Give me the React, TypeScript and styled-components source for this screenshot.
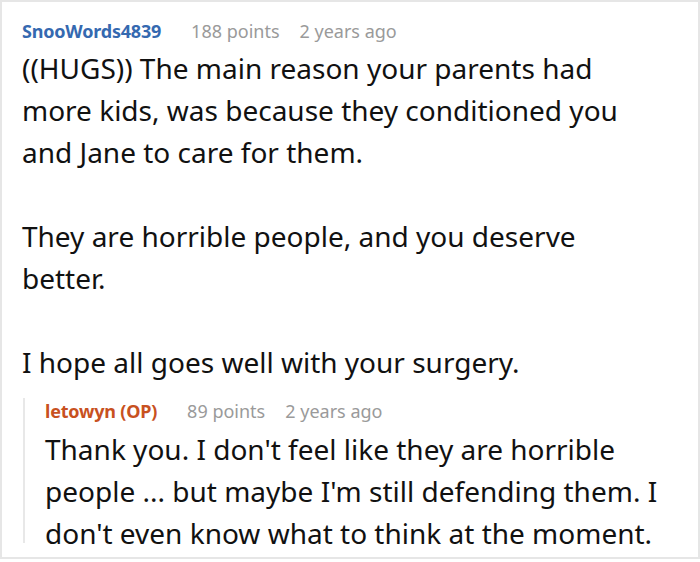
import { ReactElement } from "react";
import styled, { createGlobalStyle } from "styled-components";

const GlobalStyle = createGlobalStyle`
    html, body {
        margin: 0;
        padding: 0;
        background: #ffffff;
    }
    body {
        font-family: "Noto Sans", "Open Sans", sans-serif;
        color: #111111;
    }
`;

const CommentFrame = styled.div`
    box-sizing: border-box;
    width: 700px;
    height: 559px;
    border: 2px solid #e6e6e6;
    padding: 16px 46px 13px 20px;
`;

const MetaRow = styled.div`
    display: flex;
    align-items: baseline;
    gap: 30px;
    font-size: 18px;
    line-height: 26px;
`;

const Author = styled.span<{ $op?: boolean }>`
    font-weight: 700;
    letter-spacing: -0.2px;
    color: ${(p) => (p.$op ? "#c8511f" : "#3569b0")};
`;

const MetaInfo = styled.span`
    color: #9a9a9a;
`;

const MetaGroup = styled.span`
    display: flex;
    gap: 20px;
`;

const Body = styled.div`
    font-size: 28px;
    line-height: 42px;
    margin-top: 3px;
    p {
        margin: 0;
    }
    p + p {
        margin-top: 42px;
    }
`;

const Reply = styled.div`
    display: flex;
    flex-direction: column;
    margin-top: 15px;
    border-left: 2px solid #e8e8e8;
    padding-left: 20px;
    margin-left: 1px;
    margin-right: -30px;

    ${Body} {
        margin-top: 4px;
        margin-bottom: -11px;
    }
`;

type CommentProps = {
    author: string;
    op?: boolean;
    points: string;
    age: string;
    paragraphs: string[];
};

function CommentHeader(props: CommentProps): ReactElement {
    return (
        <MetaRow>
            <Author $op={props.op}>{props.author}</Author>
            <MetaGroup>
                <MetaInfo>{props.points}</MetaInfo>
                <MetaInfo>{props.age}</MetaInfo>
            </MetaGroup>
        </MetaRow>
    );
}

export default function App(): ReactElement {
    const parent: CommentProps = {
        author: "SnooWords4839",
        points: "188 points",
        age: "2 years ago",
        paragraphs: [
            "((HUGS)) The main reason your parents had more kids, was because they conditioned you and Jane to care for them.",
            "They are horrible people, and you deserve better.",
            "I hope all goes well with your surgery.",
        ],
    };
    const reply: CommentProps = {
        author: "letowyn (OP)",
        op: true,
        points: "89 points",
        age: "2 years ago",
        paragraphs: [
            "Thank you. I don't feel like they are horrible people ... but maybe I'm still defending them. I don't even know what to think at the moment.",
        ],
    };

    return (
        <>
            <GlobalStyle />
            <CommentFrame>
                <CommentHeader {...parent} />
                <Body>
                    {parent.paragraphs.map((text) => (
                        <p key={text}>{text}</p>
                    ))}
                </Body>
                <Reply>
                    <CommentHeader {...reply} />
                    <Body>
                        {reply.paragraphs.map((text) => (
                            <p key={text}>{text}</p>
                        ))}
                    </Body>
                </Reply>
            </CommentFrame>
        </>
    );
}
